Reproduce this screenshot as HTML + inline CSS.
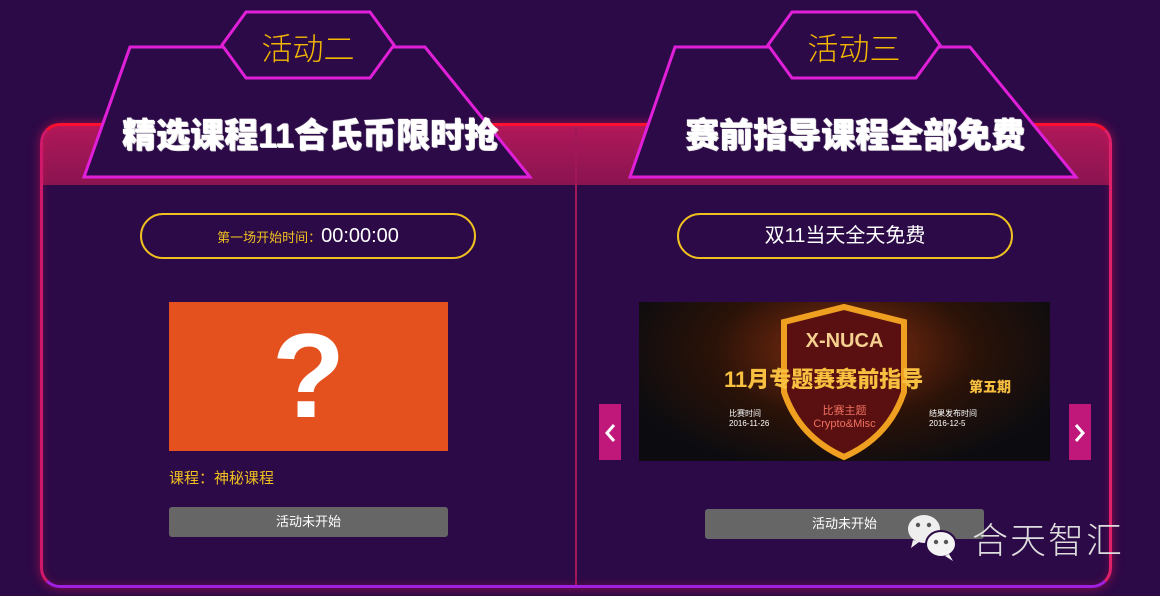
<!DOCTYPE html>
<html><head><meta charset="utf-8"><style>
*{margin:0;padding:0;box-sizing:border-box}
body{width:1160px;height:596px;background:#2c0a47;position:relative;overflow:hidden;font-family:"Liberation Sans","Noto Sans CJK SC",sans-serif}
.box{position:absolute;left:40px;top:123px;width:1072px;height:465px;border-radius:20px;border:3px solid;border-color:#ff1030 #e0206a #a020e0 #d0186a;box-shadow:0 0 10px rgba(255,20,80,.5),inset 0 0 8px rgba(255,20,80,.25)}
.band{position:absolute;left:43px;top:126px;width:1066px;height:59px;border-radius:17px 17px 0 0;background:linear-gradient(#b0185a,#8a1450)}
.div{position:absolute;left:575px;top:126px;width:2px;height:459px;background:#a0185a}
.pill{position:absolute;top:213px;height:46px;border:2px solid #f0c020;border-radius:23px;color:#fff;text-align:center;line-height:42px}
.t{position:absolute;color:#fff;font-weight:900;font-size:34px;text-align:center;letter-spacing:0px;text-shadow:0 0 1px #fff,1px 1px 0 #ddd}
.h{position:absolute;color:#f5b800;font-size:31px;font-weight:300;text-align:center}
.btn{position:absolute;height:30px;background:#666;border-radius:3px;color:#fff;font-size:13px;text-align:center;line-height:30px}
.arr{position:absolute;top:404px;width:22px;height:56px;background:#c0187a}
</style></head><body>
<div class="band"></div>
<div class="box"></div>
<div class="div"></div>
<svg width="1160" height="200" style="position:absolute;left:0;top:0">
<g fill="#2c0a47" stroke="#e020d8" stroke-width="3">
<polygon points="130,47 425,47 530,177 84,177"/>
<polygon points="246,12 370,12 394,45 370,78 246,78 222,45"/>
<polygon points="675,47 970,47 1076,177 630,177"/>
<polygon points="792,12 916,12 940,45 916,78 792,78 768,45"/>
</g></svg>
<div class="h" style="left:222px;width:172px;top:24px">活动二</div>
<div class="h" style="left:768px;width:172px;top:24px">活动三</div>
<div class="t" style="left:100px;width:420px;top:108px">精选课程11合氏币限时抢</div>
<div class="t" style="left:645px;width:420px;top:108px">赛前指导课程全部免费</div>
<div class="pill" style="left:140px;width:336px"><span style="color:#f0c020;font-size:13px">第一场开始时间：</span><span style="font-size:20px">00:00:00</span></div>
<div class="pill" style="left:677px;width:336px;font-size:20px">双11当天全天免费</div>
<div style="position:absolute;left:169px;top:302px;width:279px;height:149px;background:#e4511f;color:#fff;font-size:120px;font-weight:bold;text-align:center;line-height:149px;font-family:'Liberation Sans',sans-serif">?</div>
<div style="position:absolute;left:169px;top:467px;color:#f0c020;font-size:15px">课程：神秘课程</div>
<div class="btn" style="left:169px;top:507px;width:279px">活动未开始</div>
<div style="position:absolute;left:639px;top:302px;width:411px;height:159px;background:radial-gradient(ellipse at 50% 30%,#8a3010,#2a1208 45%,#0c0c10 80%)">
<svg width="411" height="159" style="position:absolute;left:0;top:0"><path d="M145,20 L205,5 L265,20 L265,90 Q250,135 205,155 Q160,135 145,90Z" fill="#5a1010" stroke="#f0a020" stroke-width="6"/></svg>
<div style="position:absolute;left:0;width:411px;top:28px;text-align:center;color:#f5d090;font-weight:bold;font-size:20px">X-NUCA</div>
<div style="position:absolute;left:85px;top:60px;color:#f8c040;font-weight:900;font-size:22px">11月专题赛赛前指导</div>
<div style="position:absolute;left:330px;top:75px;color:#f8c040;font-weight:900;font-size:14px">第五期</div>
<div style="position:absolute;left:0;width:411px;top:100px;text-align:center;color:#f07060;font-size:11px">比赛主题<br>Crypto&amp;Misc</div>
<div style="position:absolute;left:90px;top:106px;color:#fff;font-size:8px">比赛时间<br>2016-11-26</div>
<div style="position:absolute;left:290px;top:106px;color:#fff;font-size:8px">结果发布时间<br>2016-12-5</div>
</div>
<div class="arr" style="left:599px"><svg width="22" height="56"><path d="M15,21 L8,29 L15,37" fill="none" stroke="#fff" stroke-width="3"/></svg></div>
<div class="arr" style="left:1069px"><svg width="22" height="56"><path d="M7,21 L14,29 L7,37" fill="none" stroke="#fff" stroke-width="3"/></svg></div>
<div class="btn" style="left:705px;top:509px;width:279px">活动未开始</div>
<svg width="62" height="52" style="position:absolute;left:905px;top:510px"><ellipse cx="19" cy="19" rx="16" ry="14" fill="#eee"/><path d="M8,30 L6,38 L14,32Z" fill="#eee"/><ellipse cx="36" cy="34" rx="15" ry="13" fill="#f4f4f4" stroke="#2c0a47" stroke-width="2"/><path d="M44,44 L48,51 L40,46Z" fill="#f4f4f4"/><circle cx="13" cy="15" r="2.2" fill="#555"/><circle cx="24" cy="15" r="2.2" fill="#555"/><circle cx="31" cy="32" r="2.2" fill="#555"/><circle cx="41" cy="32" r="2.2" fill="#555"/></svg>
<div style="position:absolute;left:972px;top:512px;color:#ddd;font-size:36px;font-weight:300;letter-spacing:2px">合天智汇</div>
</body></html>
